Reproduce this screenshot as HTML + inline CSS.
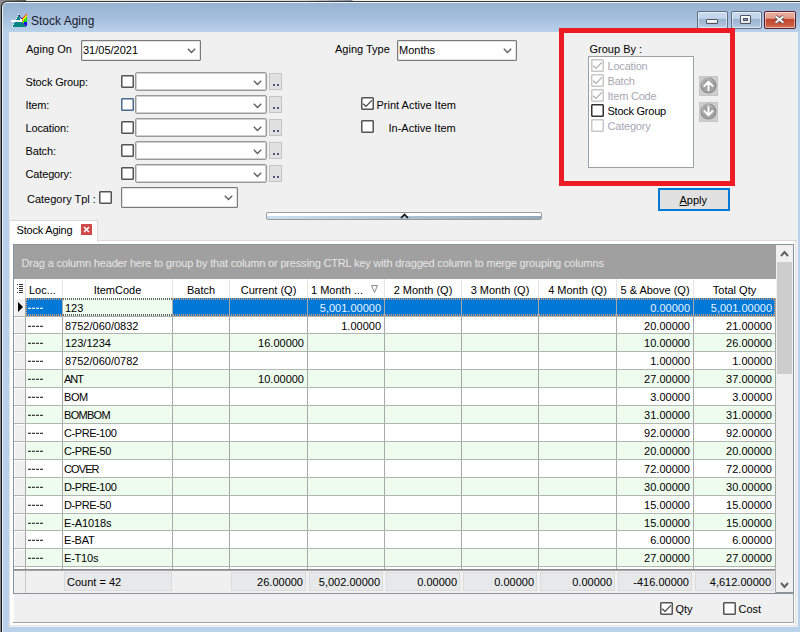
<!DOCTYPE html>
<html><head><meta charset="utf-8"><style>
html,body{margin:0;padding:0;width:800px;height:632px;overflow:hidden;background:#f0f0f0}
body{position:relative;font-family:"Liberation Sans", sans-serif}
.t{position:absolute;white-space:nowrap;line-height:1;font-family:"Liberation Sans", sans-serif}
</style></head><body>
<div style="position:absolute;left:0px;top:0px;width:800px;height:632px;background:#888888"></div><div style="position:absolute;left:26px;top:0px;width:774px;height:1px;background:linear-gradient(90deg,#e8e8e8 0px,#d8d8dc 280px,#9098b0 320px,#8890a8 326px,#f2f2f2 327px,#f0f0f0 774px)"></div><div style="position:absolute;left:0px;top:0px;width:26px;height:1px;background:linear-gradient(90deg,#8a8a8a,#5a5a5a)"></div><div style="position:absolute;left:1px;top:1px;width:820px;height:660px;background:#161616;border-top-left-radius:6px"></div><div style="position:absolute;left:6px;top:1px;width:794px;height:1px;background:#3a3a3a"></div><div style="position:absolute;left:2px;top:2px;width:820px;height:660px;background:#eef3f8;border-top-left-radius:5px"></div><div style="position:absolute;left:3px;top:3px;width:820px;height:660px;background:linear-gradient(180deg,#98b3d1 0px,#a3bddb 14px,#b9d1ea 29px,#b9d1ea 100%);border-top-left-radius:4px"></div><svg style="position:absolute;left:9px;top:11px" width="20" height="18" viewBox="0 0 20 18" shape-rendering="crispEdges"><rect x="9" y="3" width="1" height="1" fill="#ffffff"/><rect x="17" y="3" width="1" height="1" fill="#ff2a00"/><rect x="9" y="4" width="1" height="1" fill="#008484"/><rect x="10" y="4" width="1" height="1" fill="#1c1c9c"/><rect x="16" y="4" width="1" height="1" fill="#ff2a00"/><rect x="17" y="4" width="1" height="1" fill="#f4f000"/><rect x="8" y="5" width="1" height="1" fill="#ffffff"/><rect x="9" y="5" width="1" height="1" fill="#008484"/><rect x="10" y="5" width="1" height="1" fill="#1c1c9c"/><rect x="15" y="5" width="1" height="1" fill="#ff2a00"/><rect x="16" y="5" width="1" height="1" fill="#f4f000"/><rect x="17" y="5" width="1" height="1" fill="#f4f000"/><rect x="8" y="6" width="1" height="1" fill="#008484"/><rect x="9" y="6" width="1" height="1" fill="#008484"/><rect x="11" y="6" width="1" height="1" fill="#1c1c9c"/><rect x="14" y="6" width="1" height="1" fill="#ff2a00"/><rect x="15" y="6" width="1" height="1" fill="#f4f000"/><rect x="16" y="6" width="1" height="1" fill="#f4f000"/><rect x="17" y="6" width="1" height="1" fill="#10e010"/><rect x="7" y="7" width="1" height="1" fill="#ffffff"/><rect x="8" y="7" width="1" height="1" fill="#008484"/><rect x="9" y="7" width="1" height="1" fill="#008484"/><rect x="10" y="7" width="1" height="1" fill="#008484"/><rect x="12" y="7" width="1" height="1" fill="#1c1c9c"/><rect x="13" y="7" width="1" height="1" fill="#ff2a00"/><rect x="14" y="7" width="1" height="1" fill="#f4f000"/><rect x="15" y="7" width="1" height="1" fill="#f4f000"/><rect x="16" y="7" width="1" height="1" fill="#10e010"/><rect x="17" y="7" width="1" height="1" fill="#10e010"/><rect x="7" y="8" width="1" height="1" fill="#008484"/><rect x="8" y="8" width="1" height="1" fill="#008484"/><rect x="9" y="8" width="1" height="1" fill="#008484"/><rect x="10" y="8" width="1" height="1" fill="#008484"/><rect x="11" y="8" width="1" height="1" fill="#ffffff"/><rect x="12" y="8" width="1" height="1" fill="#ffffff"/><rect x="13" y="8" width="1" height="1" fill="#ffb000"/><rect x="14" y="8" width="1" height="1" fill="#f4f000"/><rect x="15" y="8" width="1" height="1" fill="#10e010"/><rect x="16" y="8" width="1" height="1" fill="#f4f000"/><rect x="17" y="8" width="1" height="1" fill="#10e010"/><rect x="2" y="9" width="1" height="1" fill="#ffffff"/><rect x="3" y="9" width="1" height="1" fill="#ffffff"/><rect x="4" y="9" width="1" height="1" fill="#ffffff"/><rect x="5" y="9" width="1" height="1" fill="#ffffff"/><rect x="6" y="9" width="1" height="1" fill="#ffffff"/><rect x="7" y="9" width="1" height="1" fill="#ffffff"/><rect x="8" y="9" width="1" height="1" fill="#ffffff"/><rect x="9" y="9" width="1" height="1" fill="#ffffff"/><rect x="10" y="9" width="1" height="1" fill="#ffffff"/><rect x="11" y="9" width="1" height="1" fill="#ffffff"/><rect x="12" y="9" width="1" height="1" fill="#ffffff"/><rect x="13" y="9" width="1" height="1" fill="#9020a0"/><rect x="14" y="9" width="1" height="1" fill="#f4f000"/><rect x="15" y="9" width="1" height="1" fill="#10e010"/><rect x="16" y="9" width="1" height="1" fill="#10e010"/><rect x="17" y="9" width="1" height="1" fill="#10e010"/><rect x="2" y="10" width="1" height="1" fill="#ffffff"/><rect x="3" y="10" width="1" height="1" fill="#ffffff"/><rect x="4" y="10" width="1" height="1" fill="#ffffff"/><rect x="5" y="10" width="1" height="1" fill="#ffffff"/><rect x="6" y="10" width="1" height="1" fill="#ffffff"/><rect x="7" y="10" width="1" height="1" fill="#ffffff"/><rect x="8" y="10" width="1" height="1" fill="#ffffff"/><rect x="9" y="10" width="1" height="1" fill="#ffffff"/><rect x="10" y="10" width="1" height="1" fill="#ffffff"/><rect x="11" y="10" width="1" height="1" fill="#ffffff"/><rect x="12" y="10" width="1" height="1" fill="#ffffff"/><rect x="13" y="10" width="1" height="1" fill="#f4f000"/><rect x="14" y="10" width="1" height="1" fill="#10e010"/><rect x="15" y="10" width="1" height="1" fill="#10e010"/><rect x="16" y="10" width="1" height="1" fill="#10e010"/><rect x="17" y="10" width="1" height="1" fill="#10e010"/><rect x="6" y="11" width="1" height="1" fill="#008484"/><rect x="7" y="11" width="1" height="1" fill="#008484"/><rect x="8" y="11" width="1" height="1" fill="#008484"/><rect x="9" y="11" width="1" height="1" fill="#008484"/><rect x="10" y="11" width="1" height="1" fill="#008484"/><rect x="11" y="11" width="1" height="1" fill="#008484"/><rect x="12" y="11" width="1" height="1" fill="#008484"/><rect x="13" y="11" width="1" height="1" fill="#008484"/><rect x="14" y="11" width="1" height="1" fill="#ffb000"/><rect x="15" y="11" width="1" height="1" fill="#0a0aff"/><rect x="16" y="11" width="1" height="1" fill="#0a0aff"/><rect x="17" y="11" width="1" height="1" fill="#0a0aff"/><rect x="5" y="12" width="1" height="1" fill="#008484"/><rect x="6" y="12" width="1" height="1" fill="#008484"/><rect x="7" y="12" width="1" height="1" fill="#008484"/><rect x="8" y="12" width="1" height="1" fill="#008484"/><rect x="9" y="12" width="1" height="1" fill="#008484"/><rect x="10" y="12" width="1" height="1" fill="#008484"/><rect x="11" y="12" width="1" height="1" fill="#008484"/><rect x="12" y="12" width="1" height="1" fill="#008484"/><rect x="13" y="12" width="1" height="1" fill="#008484"/><rect x="14" y="12" width="1" height="1" fill="#008484"/><rect x="15" y="12" width="1" height="1" fill="#0a0aff"/><rect x="16" y="12" width="1" height="1" fill="#0a0aff"/><rect x="17" y="12" width="1" height="1" fill="#0a0aff"/><rect x="4" y="13" width="1" height="1" fill="#ffffff"/><rect x="5" y="13" width="1" height="1" fill="#008484"/><rect x="6" y="13" width="1" height="1" fill="#008484"/><rect x="7" y="13" width="1" height="1" fill="#008484"/><rect x="8" y="13" width="1" height="1" fill="#008484"/><rect x="9" y="13" width="1" height="1" fill="#008484"/><rect x="10" y="13" width="1" height="1" fill="#008484"/><rect x="11" y="13" width="1" height="1" fill="#008484"/><rect x="12" y="13" width="1" height="1" fill="#008484"/><rect x="13" y="13" width="1" height="1" fill="#008484"/><rect x="14" y="13" width="1" height="1" fill="#008484"/><rect x="15" y="13" width="1" height="1" fill="#9020a0"/><rect x="16" y="13" width="1" height="1" fill="#0a0aff"/><rect x="17" y="13" width="1" height="1" fill="#0a0aff"/><rect x="4" y="14" width="1" height="1" fill="#008484"/><rect x="5" y="14" width="1" height="1" fill="#008484"/><rect x="6" y="14" width="1" height="1" fill="#008484"/><rect x="7" y="14" width="1" height="1" fill="#008484"/><rect x="8" y="14" width="1" height="1" fill="#008484"/><rect x="9" y="14" width="1" height="1" fill="#008484"/><rect x="10" y="14" width="1" height="1" fill="#008484"/><rect x="11" y="14" width="1" height="1" fill="#008484"/><rect x="12" y="14" width="1" height="1" fill="#008484"/><rect x="13" y="14" width="1" height="1" fill="#008484"/><rect x="14" y="14" width="1" height="1" fill="#008484"/><rect x="15" y="14" width="1" height="1" fill="#008484"/><rect x="16" y="14" width="1" height="1" fill="#9020a0"/><rect x="17" y="14" width="1" height="1" fill="#0a0aff"/><rect x="3" y="15" width="1" height="1" fill="#ffffff"/><rect x="4" y="15" width="1" height="1" fill="#008484"/><rect x="5" y="15" width="1" height="1" fill="#008484"/><rect x="6" y="15" width="1" height="1" fill="#008484"/><rect x="7" y="15" width="1" height="1" fill="#008484"/><rect x="8" y="15" width="1" height="1" fill="#008484"/><rect x="9" y="15" width="1" height="1" fill="#008484"/><rect x="10" y="15" width="1" height="1" fill="#008484"/><rect x="11" y="15" width="1" height="1" fill="#008484"/><rect x="12" y="15" width="1" height="1" fill="#008484"/><rect x="13" y="15" width="1" height="1" fill="#008484"/><rect x="14" y="15" width="1" height="1" fill="#008484"/><rect x="15" y="15" width="1" height="1" fill="#008484"/><rect x="16" y="15" width="1" height="1" fill="#008484"/></svg><div class="t " style="left:31px;top:15.14px;font-size:12px;color:#1a1a2a;">Stock Aging</div><div style="position:absolute;left:697px;top:11px;width:29px;height:16px;border:1px solid #5c6c82;border-radius:2px;background:linear-gradient(180deg,#cbdbee 0%,#c2d4ea 40%,#9ab3cf 44%,#a9c0da 80%,#bcd2e8 100%);box-shadow:inset 0 0 0 1px rgba(255,255,255,0.5)"></div><div style="position:absolute;left:731px;top:11px;width:29px;height:16px;border:1px solid #5c6c82;border-radius:2px;background:linear-gradient(180deg,#cbdbee 0%,#c2d4ea 40%,#9ab3cf 44%,#a9c0da 80%,#bcd2e8 100%);box-shadow:inset 0 0 0 1px rgba(255,255,255,0.5)"></div><div style="position:absolute;left:764px;top:11px;width:30px;height:16px;border:1px solid #5a2030;border-radius:2px;background:linear-gradient(180deg,#eab0a2 0%,#e39c8a 40%,#c0432a 44%,#c85a40 80%,#d27a62 100%);box-shadow:inset 0 0 0 1px rgba(255,255,255,0.5)"></div><div style="position:absolute;left:706px;top:19px;width:10px;height:3px;background:linear-gradient(180deg,#fff,#e0e0e0);border:1px solid #4a5566;border-radius:1px"></div><div style="position:absolute;left:740px;top:15px;width:9px;height:7px;border:1px solid #4a5566;border-radius:1px;background:linear-gradient(180deg,#fff,#e4e4e4)"></div><div style="position:absolute;left:743px;top:18px;width:3px;height:1px;border:1px solid #4a5566;background:#8aa0bc"></div><svg style="position:absolute;left:774px;top:15px" width="11" height="9" viewBox="0 0 11 9">
<path d="M1.6,1.4 L9.4,7.6 M9.4,1.4 L1.6,7.6" stroke="#4a3a40" stroke-width="3.6"/>
<path d="M1.6,1.4 L9.4,7.6 M9.4,1.4 L1.6,7.6" stroke="#f2f2f2" stroke-width="2"/>
</svg><div style="position:absolute;left:9px;top:32px;width:789px;height:595px;background:#f0f0f0"></div><div class="t " style="left:26px;top:44.09px;font-size:11px;color:#000;">Aging On</div><div style="position:absolute;left:81px;top:40px;width:118px;height:19px;border:1px solid #7a7a7a;background:#fff;border-radius:1px;box-shadow:inset 0 0 0 0.5px #c8c8c8;"></div><svg style="position:absolute;left:187px;top:48px" width="10" height="6" viewBox="0 0 10 6"><path d="M0.8,0.8 L4.5,4.5 L8.2,0.8" stroke="#606060" stroke-width="1.4" fill="none"/></svg><div class="t " style="left:83px;top:45.19px;font-size:11px;color:#000;">31/05/2021</div><div class="t " style="left:335px;top:44.49px;font-size:11px;color:#000;">Aging Type</div><div style="position:absolute;left:397px;top:40px;width:118px;height:19px;border:1px solid #7a7a7a;background:#fff;border-radius:1px;box-shadow:inset 0 0 0 0.5px #c8c8c8;"></div><svg style="position:absolute;left:503px;top:48px" width="10" height="6" viewBox="0 0 10 6"><path d="M0.8,0.8 L4.5,4.5 L8.2,0.8" stroke="#606060" stroke-width="1.4" fill="none"/></svg><div class="t " style="left:399px;top:45.19px;font-size:11px;color:#000;">Months</div><div class="t " style="left:25.5px;top:77.09px;font-size:11px;color:#000;letter-spacing:-0.15px">Stock Group:</div><div style="position:absolute;left:121px;top:75px;width:11px;height:11px;border:1px solid #555;border-radius:1px;background:#fff;box-shadow:inset 0 0 0 0.5px #555"></div><div style="position:absolute;left:135px;top:72px;width:130px;height:17px;border:1px solid #9a9a9a;background:#fff;border-radius:2px;box-shadow:inset 0 0 0 1px #cfcfcf;"></div><svg style="position:absolute;left:253px;top:80px" width="10" height="6" viewBox="0 0 10 6"><path d="M0.8,0.8 L4.5,4.5 L8.2,0.8" stroke="#606060" stroke-width="1.4" fill="none"/></svg><div style="position:absolute;left:269px;top:73px;width:11px;height:15px;border:1px solid #c4c4c4;background:#e1e1e1"></div><div style="position:absolute;left:273px;top:84px;width:2px;height:2px;background:#55557a"></div><div style="position:absolute;left:277px;top:84px;width:2px;height:2px;background:#55557a"></div><div class="t " style="left:25.5px;top:100.09px;font-size:11px;color:#000;letter-spacing:-0.15px">Item:</div><div style="position:absolute;left:121px;top:98px;width:11px;height:11px;border:1px solid #4a6a8a;border-radius:1px;background:#fff;box-shadow:inset 0 0 0 0.5px #4a6a8a"></div><div style="position:absolute;left:135px;top:95px;width:130px;height:17px;border:1px solid #9a9a9a;background:#fff;border-radius:2px;box-shadow:inset 0 0 0 1px #cfcfcf;"></div><svg style="position:absolute;left:253px;top:103px" width="10" height="6" viewBox="0 0 10 6"><path d="M0.8,0.8 L4.5,4.5 L8.2,0.8" stroke="#606060" stroke-width="1.4" fill="none"/></svg><div style="position:absolute;left:269px;top:96px;width:11px;height:15px;border:1px solid #c4c4c4;background:#e1e1e1"></div><div style="position:absolute;left:273px;top:107px;width:2px;height:2px;background:#55557a"></div><div style="position:absolute;left:277px;top:107px;width:2px;height:2px;background:#55557a"></div><div class="t " style="left:25.5px;top:123.09px;font-size:11px;color:#000;letter-spacing:-0.15px">Location:</div><div style="position:absolute;left:121px;top:121px;width:11px;height:11px;border:1px solid #555;border-radius:1px;background:#fff;box-shadow:inset 0 0 0 0.5px #555"></div><div style="position:absolute;left:135px;top:118px;width:130px;height:17px;border:1px solid #9a9a9a;background:#fff;border-radius:2px;box-shadow:inset 0 0 0 1px #cfcfcf;"></div><svg style="position:absolute;left:253px;top:126px" width="10" height="6" viewBox="0 0 10 6"><path d="M0.8,0.8 L4.5,4.5 L8.2,0.8" stroke="#606060" stroke-width="1.4" fill="none"/></svg><div style="position:absolute;left:269px;top:119px;width:11px;height:15px;border:1px solid #c4c4c4;background:#e1e1e1"></div><div style="position:absolute;left:273px;top:130px;width:2px;height:2px;background:#55557a"></div><div style="position:absolute;left:277px;top:130px;width:2px;height:2px;background:#55557a"></div><div class="t " style="left:25.5px;top:146.09px;font-size:11px;color:#000;letter-spacing:-0.15px">Batch:</div><div style="position:absolute;left:121px;top:144px;width:11px;height:11px;border:1px solid #555;border-radius:1px;background:#fff;box-shadow:inset 0 0 0 0.5px #555"></div><div style="position:absolute;left:135px;top:141px;width:130px;height:17px;border:1px solid #9a9a9a;background:#fff;border-radius:2px;box-shadow:inset 0 0 0 1px #cfcfcf;"></div><svg style="position:absolute;left:253px;top:149px" width="10" height="6" viewBox="0 0 10 6"><path d="M0.8,0.8 L4.5,4.5 L8.2,0.8" stroke="#606060" stroke-width="1.4" fill="none"/></svg><div style="position:absolute;left:269px;top:142px;width:11px;height:15px;border:1px solid #c4c4c4;background:#e1e1e1"></div><div style="position:absolute;left:273px;top:153px;width:2px;height:2px;background:#55557a"></div><div style="position:absolute;left:277px;top:153px;width:2px;height:2px;background:#55557a"></div><div class="t " style="left:25.5px;top:169.09px;font-size:11px;color:#000;letter-spacing:-0.15px">Category:</div><div style="position:absolute;left:121px;top:167px;width:11px;height:11px;border:1px solid #555;border-radius:1px;background:#fff;box-shadow:inset 0 0 0 0.5px #555"></div><div style="position:absolute;left:135px;top:164px;width:130px;height:17px;border:1px solid #9a9a9a;background:#fff;border-radius:2px;box-shadow:inset 0 0 0 1px #cfcfcf;"></div><svg style="position:absolute;left:253px;top:172px" width="10" height="6" viewBox="0 0 10 6"><path d="M0.8,0.8 L4.5,4.5 L8.2,0.8" stroke="#606060" stroke-width="1.4" fill="none"/></svg><div style="position:absolute;left:269px;top:165px;width:11px;height:15px;border:1px solid #c4c4c4;background:#e1e1e1"></div><div style="position:absolute;left:273px;top:176px;width:2px;height:2px;background:#55557a"></div><div style="position:absolute;left:277px;top:176px;width:2px;height:2px;background:#55557a"></div><div class="t " style="left:27px;top:193.89px;font-size:11px;color:#000;">Category Tpl :</div><div style="position:absolute;left:99px;top:191px;width:11px;height:11px;border:1px solid #555;border-radius:1px;background:#fff;box-shadow:inset 0 0 0 0.5px #555"></div><div style="position:absolute;left:121px;top:187px;width:115px;height:19px;border:1px solid #7a7a7a;background:#fff;border-radius:1px;box-shadow:inset 0 0 0 0.5px #c8c8c8;"></div><svg style="position:absolute;left:224px;top:195px" width="10" height="6" viewBox="0 0 10 6"><path d="M0.8,0.8 L4.5,4.5 L8.2,0.8" stroke="#606060" stroke-width="1.4" fill="none"/></svg><div style="position:absolute;left:361px;top:97px;width:11px;height:11px;border:1px solid #555;border-radius:1px;background:#fff;box-shadow:inset 0 0 0 0.5px #555"></div><svg style="position:absolute;left:361px;top:97px" width="13" height="13" viewBox="0 0 13 13"><path d="M2.2,6.8 L5,9.4 L10.8,3.4" stroke="#444" stroke-width="1.3" fill="none"/></svg><div class="t " style="left:376.5px;top:99.89px;font-size:11px;color:#000;">Print Active Item</div><div style="position:absolute;left:361px;top:120px;width:11px;height:11px;border:1px solid #555;border-radius:1px;background:#fff;box-shadow:inset 0 0 0 0.5px #555"></div><div class="t " style="left:388.5px;top:122.89px;font-size:11px;color:#000;">In-Active Item</div><div class="t " style="left:589.5px;top:44.29px;font-size:11px;color:#000;">Group By :</div><div style="position:absolute;left:588px;top:56px;width:104px;height:110px;border:1px solid #9ca1a8;background:#fff"></div><div style="position:absolute;left:591px;top:59px;width:11px;height:11px;border:1px solid #c8c8c8;border-radius:1px;background:#fff;box-shadow:inset 0 0 0 0.5px #c8c8c8"></div><svg style="position:absolute;left:591px;top:59px" width="13" height="13" viewBox="0 0 13 13"><path d="M2.2,6.8 L5,9.4 L10.8,3.4" stroke="#b0b0b0" stroke-width="1.3" fill="none"/></svg><div class="t " style="left:607.5px;top:60.99px;font-size:11px;color:#a8a8b4;letter-spacing:-0.2px">Location</div><div style="position:absolute;left:591px;top:74px;width:11px;height:11px;border:1px solid #c8c8c8;border-radius:1px;background:#fff;box-shadow:inset 0 0 0 0.5px #c8c8c8"></div><svg style="position:absolute;left:591px;top:74px" width="13" height="13" viewBox="0 0 13 13"><path d="M2.2,6.8 L5,9.4 L10.8,3.4" stroke="#b0b0b0" stroke-width="1.3" fill="none"/></svg><div class="t " style="left:607.5px;top:75.99px;font-size:11px;color:#a8a8b4;letter-spacing:-0.2px">Batch</div><div style="position:absolute;left:591px;top:89px;width:11px;height:11px;border:1px solid #c8c8c8;border-radius:1px;background:#fff;box-shadow:inset 0 0 0 0.5px #c8c8c8"></div><svg style="position:absolute;left:591px;top:89px" width="13" height="13" viewBox="0 0 13 13"><path d="M2.2,6.8 L5,9.4 L10.8,3.4" stroke="#b0b0b0" stroke-width="1.3" fill="none"/></svg><div class="t " style="left:607.5px;top:90.99px;font-size:11px;color:#a8a8b4;letter-spacing:-0.2px">Item Code</div><div style="position:absolute;left:591px;top:104px;width:11px;height:11px;border:1px solid #333;border-radius:1px;background:#fff;box-shadow:inset 0 0 0 0.5px #333"></div><div class="t " style="left:607.5px;top:105.99px;font-size:11px;color:#000;letter-spacing:-0.25px">Stock Group</div><div style="position:absolute;left:591px;top:119px;width:11px;height:11px;border:1px solid #c8c8c8;border-radius:1px;background:#fff;box-shadow:inset 0 0 0 0.5px #c8c8c8"></div><div class="t " style="left:607.5px;top:120.99px;font-size:11px;color:#a8a8b4;letter-spacing:-0.2px">Category</div><svg style="position:absolute;left:699px;top:76px" width="19" height="20" viewBox="0 0 19 20">
<rect x="0" y="0" width="19" height="20" fill="#cdcdcd"/>
<rect x="0.5" y="0.5" width="18" height="19" fill="none" stroke="#c6c6c6"/>
<circle cx="9.5" cy="9.6" r="7.4" fill="#a2a2a2" stroke="#8c8c8c" stroke-width="1.2"/>
<path d="M4.2,11.5 A5.6,5.6 0 0 1 13.5,5" fill="none" stroke="#c4c4c4" stroke-width="1"/>
<path d="M5.4,10 L9.5,5.6 L13.6,10 M9.5,6.2 L9.5,14.2" stroke="#ffffff" stroke-width="1.9" fill="none" stroke-linecap="round" stroke-linejoin="round"/>
</svg><svg style="position:absolute;left:699px;top:102px" width="19" height="20" viewBox="0 0 19 20">
<rect x="0" y="0" width="19" height="20" fill="#cdcdcd"/>
<rect x="0.5" y="0.5" width="18" height="19" fill="none" stroke="#c6c6c6"/>
<circle cx="9.5" cy="9.6" r="7.4" fill="#a2a2a2" stroke="#8c8c8c" stroke-width="1.2"/>
<path d="M4.2,11.5 A5.6,5.6 0 0 1 13.5,5" fill="none" stroke="#c4c4c4" stroke-width="1"/>
<path d="M5.4,9 L9.5,13.4 L13.6,9 M9.5,4.8 L9.5,12.8" stroke="#ffffff" stroke-width="1.9" fill="none" stroke-linecap="round" stroke-linejoin="round"/>
</svg><div style="position:absolute;left:559px;top:28px;width:166px;height:148px;border:5px solid #ed1c24"></div><div style="position:absolute;left:658px;top:188px;width:68px;height:19px;border:2px solid #0078d7;background:#e1e1e1"></div><div class="t " style="left:679.5px;top:195.29px;font-size:11px;color:#000;"><u>A</u>pply</div><div style="position:absolute;left:266px;top:212px;width:274px;height:6px;border:1px solid #9a9a9a;border-radius:2px;background:linear-gradient(180deg,#fff 0,#fff 3px,transparent 3px),linear-gradient(90deg,#c8e0f0,#90a8b8)"></div><svg style="position:absolute;left:400px;top:213px" width="9" height="6" viewBox="0 0 9 6"><path d="M1,5 L4.5,1.5 L8,5" stroke="#111" stroke-width="1.6" fill="none"/></svg><div style="position:absolute;left:9px;top:240px;width:789px;height:387px;background:#fff"></div><div style="position:absolute;left:795px;top:240px;width:1px;height:386px;background:#e3e3e3"></div><div style="position:absolute;left:796px;top:240px;width:2px;height:387px;background:#f0f0f0"></div><div style="position:absolute;left:9px;top:220px;width:1px;height:407px;background:#e3e3e3"></div><div style="position:absolute;left:9px;top:625px;width:787px;height:1px;background:#e3e3e3"></div><div style="position:absolute;left:9px;top:626px;width:789px;height:1px;background:#f0f0f0"></div><div style="position:absolute;left:9px;top:220px;width:87px;height:21px;border:1px solid #d9d9d9;border-left:1px solid #e3e3e3;border-bottom:none;background:#fff"></div><div style="position:absolute;left:97px;top:240px;width:700px;height:1px;background:#d9d9d9"></div><div class="t " style="left:16.5px;top:225.49px;font-size:11px;color:#000;letter-spacing:-0.2px">Stock Aging</div><div style="position:absolute;left:81px;top:224px;width:11px;height:11px;background:#d04848"></div><svg style="position:absolute;left:81px;top:224px" width="11" height="11" viewBox="0 0 11 11"><path d="M3,3 L8,8 M8,3 L3,8" stroke="#fff" stroke-width="1.6"/></svg><div style="position:absolute;left:13px;top:244px;width:780px;height:378px;border-right:1px solid #a0a0a0;border-bottom:1px solid #a0a0a0;background:#f0f0f0;box-sizing:content-box"></div><div style="position:absolute;left:13px;top:594px;width:1px;height:28px;background:#fff"></div><div style="position:absolute;left:13px;top:244px;width:779px;height:348px;border:1px solid #8a929c;background:#fff"></div><div style="position:absolute;left:14px;top:245px;width:762px;height:34px;background:#a0a0a0"></div><div class="t " style="left:21.6px;top:258.39px;font-size:11px;color:#e6e6e6;letter-spacing:-0.17px">Drag a column header here to group by that column or pressing CTRL key with dragged column to merge grouping columns</div><div style="position:absolute;left:776px;top:245px;width:17px;height:348px;background:#f0f0f0"></div><div style="position:absolute;left:777px;top:262px;width:15px;height:112px;background:#cdcdcd"></div><svg style="position:absolute;left:780px;top:250px" width="9" height="7" viewBox="0 0 9 7"><path d="M1,6 L4.5,2 L8,6" stroke="#606060" stroke-width="2" fill="none"/></svg><svg style="position:absolute;left:780px;top:582px" width="9" height="7" viewBox="0 0 9 7"><path d="M1,1 L4.5,5 L8,1" stroke="#606060" stroke-width="2" fill="none"/></svg><div style="position:absolute;left:14px;top:279px;width:762px;height:20px;background:#fff"></div><div style="position:absolute;left:25px;top:279px;width:1px;height:20px;background:#e4e4e4"></div><div style="position:absolute;left:62px;top:279px;width:1px;height:20px;background:#e4e4e4"></div><div style="position:absolute;left:172px;top:279px;width:1px;height:20px;background:#e4e4e4"></div><div style="position:absolute;left:229px;top:279px;width:1px;height:20px;background:#e4e4e4"></div><div style="position:absolute;left:307px;top:279px;width:1px;height:20px;background:#e4e4e4"></div><div style="position:absolute;left:384px;top:279px;width:1px;height:20px;background:#e4e4e4"></div><div style="position:absolute;left:461px;top:279px;width:1px;height:20px;background:#e4e4e4"></div><div style="position:absolute;left:538px;top:279px;width:1px;height:20px;background:#e4e4e4"></div><div style="position:absolute;left:616px;top:279px;width:1px;height:20px;background:#e4e4e4"></div><div style="position:absolute;left:693px;top:279px;width:1px;height:20px;background:#e4e4e4"></div><div class="t " style="left:29px;top:285.49px;font-size:11px;color:#000;">Loc...</div><div class="t" style="left:-82.5px;width:400px;text-align:center;top:285.49px;font-size:11px;color:#000;">ItemCode</div><div class="t" style="left:1.0px;width:400px;text-align:center;top:285.49px;font-size:11px;color:#000;">Batch</div><div class="t" style="left:68.5px;width:400px;text-align:center;top:285.49px;font-size:11px;color:#000;">Current (Q)</div><div class="t " style="left:311px;top:285.49px;font-size:11px;color:#000;">1 Month ...</div><div class="t" style="left:223.0px;width:400px;text-align:center;top:285.49px;font-size:11px;color:#000;">2 Month (Q)</div><div class="t" style="left:300.0px;width:400px;text-align:center;top:285.49px;font-size:11px;color:#000;">3 Month (Q)</div><div class="t" style="left:377.5px;width:400px;text-align:center;top:285.49px;font-size:11px;color:#000;">4 Month (Q)</div><div class="t" style="left:455.0px;width:400px;text-align:center;top:285.49px;font-size:11px;color:#000;">5 &amp; Above (Q)</div><div class="t" style="left:534.5px;width:400px;text-align:center;top:285.49px;font-size:11px;color:#000;">Total Qty</div><svg style="position:absolute;left:370px;top:284px" width="9" height="10" viewBox="0 0 9 10"><path d="M1.5,1.5 L7.5,1.5 L4.5,8.5 Z" stroke="#8a8a8a" stroke-width="1" fill="none"/></svg><div style="position:absolute;left:19px;top:284px;width:4px;height:1px;background:#333"></div><div style="position:absolute;left:19px;top:286px;width:4px;height:1px;background:#333"></div><div style="position:absolute;left:19px;top:288px;width:4px;height:1px;background:#333"></div><div style="position:absolute;left:19px;top:290px;width:4px;height:1px;background:#333"></div><div style="position:absolute;left:19px;top:292px;width:4px;height:1px;background:#333"></div><div style="position:absolute;left:17px;top:284px;width:1px;height:1px;background:#333"></div><div style="position:absolute;left:17px;top:288px;width:1px;height:1px;background:#333"></div><div style="position:absolute;left:17px;top:292px;width:1px;height:1px;background:#333"></div><div style="position:absolute;left:14px;top:298px;width:11px;height:18px;background:#f0f0f0;box-shadow:inset 1px 1px 0 #fff"></div><div style="position:absolute;left:26px;top:298px;width:749px;height:18px;background:#eefcee"></div><div style="position:absolute;left:26px;top:298px;width:37px;height:18px;background:#0078d7"></div><div style="position:absolute;left:173px;top:298px;width:602px;height:18px;background:#0078d7"></div><div style="position:absolute;left:14px;top:316px;width:762px;height:1px;background:#b2b6b2"></div><div style="position:absolute;left:25px;top:298px;width:1px;height:18px;background:#a8a8a8"></div><div style="position:absolute;left:62px;top:298px;width:1px;height:18px;background:#a8a8a8"></div><div style="position:absolute;left:172px;top:298px;width:1px;height:18px;background:#a8a8a8"></div><div style="position:absolute;left:229px;top:298px;width:1px;height:18px;background:#a8a8a8"></div><div style="position:absolute;left:307px;top:298px;width:1px;height:18px;background:#a8a8a8"></div><div style="position:absolute;left:384px;top:298px;width:1px;height:18px;background:#a8a8a8"></div><div style="position:absolute;left:461px;top:298px;width:1px;height:18px;background:#a8a8a8"></div><div style="position:absolute;left:538px;top:298px;width:1px;height:18px;background:#a8a8a8"></div><div style="position:absolute;left:616px;top:298px;width:1px;height:18px;background:#a8a8a8"></div><div style="position:absolute;left:693px;top:298px;width:1px;height:18px;background:#a8a8a8"></div><div style="position:absolute;left:775px;top:298px;width:1px;height:18px;background:#a8a8a8"></div><div style="position:absolute;left:28px;top:308px;width:3px;height:1px;background:rgba(225,242,255,0.95)"></div><div style="position:absolute;left:28px;top:307px;width:3px;height:1px;background:rgba(225,242,255,0.35)"></div><div style="position:absolute;left:32px;top:308px;width:3px;height:1px;background:rgba(225,242,255,0.95)"></div><div style="position:absolute;left:32px;top:307px;width:3px;height:1px;background:rgba(225,242,255,0.35)"></div><div style="position:absolute;left:36px;top:308px;width:3px;height:1px;background:rgba(225,242,255,0.95)"></div><div style="position:absolute;left:36px;top:307px;width:3px;height:1px;background:rgba(225,242,255,0.35)"></div><div style="position:absolute;left:40px;top:308px;width:3px;height:1px;background:rgba(225,242,255,0.95)"></div><div style="position:absolute;left:40px;top:307px;width:3px;height:1px;background:rgba(225,242,255,0.35)"></div><div class="t " style="left:65px;top:303.49px;font-size:11px;color:#000;">123</div><div class="t" style="right:419px;top:303.49px;font-size:11px;color:#e8f4ff;">5,001.00000</div><div class="t" style="right:110px;top:303.49px;font-size:11px;color:#e8f4ff;">0.00000</div><div class="t" style="right:28px;top:303.49px;font-size:11px;color:#e8f4ff;">5,001.00000</div><div style="position:absolute;left:14px;top:317px;width:11px;height:16px;background:#f0f0f0;box-shadow:inset 1px 1px 0 #fff"></div><div style="position:absolute;left:26px;top:317px;width:749px;height:16px;background:#ffffff"></div><div style="position:absolute;left:14px;top:333px;width:762px;height:1px;background:#b2b6b2"></div><div style="position:absolute;left:25px;top:317px;width:1px;height:16px;background:#a8a8a8"></div><div style="position:absolute;left:62px;top:317px;width:1px;height:16px;background:#a8a8a8"></div><div style="position:absolute;left:172px;top:317px;width:1px;height:16px;background:#a8a8a8"></div><div style="position:absolute;left:229px;top:317px;width:1px;height:16px;background:#a8a8a8"></div><div style="position:absolute;left:307px;top:317px;width:1px;height:16px;background:#a8a8a8"></div><div style="position:absolute;left:384px;top:317px;width:1px;height:16px;background:#a8a8a8"></div><div style="position:absolute;left:461px;top:317px;width:1px;height:16px;background:#a8a8a8"></div><div style="position:absolute;left:538px;top:317px;width:1px;height:16px;background:#a8a8a8"></div><div style="position:absolute;left:616px;top:317px;width:1px;height:16px;background:#a8a8a8"></div><div style="position:absolute;left:693px;top:317px;width:1px;height:16px;background:#a8a8a8"></div><div style="position:absolute;left:775px;top:317px;width:1px;height:16px;background:#a8a8a8"></div><div style="position:absolute;left:28px;top:326px;width:3px;height:1px;background:rgba(0,0,0,0.75)"></div><div style="position:absolute;left:28px;top:325px;width:3px;height:1px;background:rgba(0,0,0,0.22)"></div><div style="position:absolute;left:32px;top:326px;width:3px;height:1px;background:rgba(0,0,0,0.75)"></div><div style="position:absolute;left:32px;top:325px;width:3px;height:1px;background:rgba(0,0,0,0.22)"></div><div style="position:absolute;left:36px;top:326px;width:3px;height:1px;background:rgba(0,0,0,0.75)"></div><div style="position:absolute;left:36px;top:325px;width:3px;height:1px;background:rgba(0,0,0,0.22)"></div><div style="position:absolute;left:40px;top:326px;width:3px;height:1px;background:rgba(0,0,0,0.75)"></div><div style="position:absolute;left:40px;top:325px;width:3px;height:1px;background:rgba(0,0,0,0.22)"></div><div class="t " style="left:65px;top:321.49px;font-size:11px;color:#000;">8752/060/0832</div><div class="t" style="right:419px;top:321.49px;font-size:11px;color:#000;">1.00000</div><div class="t" style="right:110px;top:321.49px;font-size:11px;color:#000;">20.00000</div><div class="t" style="right:28px;top:321.49px;font-size:11px;color:#000;">21.00000</div><div style="position:absolute;left:14px;top:334px;width:11px;height:17px;background:#f0f0f0;box-shadow:inset 1px 1px 0 #fff"></div><div style="position:absolute;left:26px;top:334px;width:749px;height:17px;background:#eefcee"></div><div style="position:absolute;left:14px;top:351px;width:762px;height:1px;background:#b2b6b2"></div><div style="position:absolute;left:25px;top:334px;width:1px;height:17px;background:#a8a8a8"></div><div style="position:absolute;left:62px;top:334px;width:1px;height:17px;background:#a8a8a8"></div><div style="position:absolute;left:172px;top:334px;width:1px;height:17px;background:#a8a8a8"></div><div style="position:absolute;left:229px;top:334px;width:1px;height:17px;background:#a8a8a8"></div><div style="position:absolute;left:307px;top:334px;width:1px;height:17px;background:#a8a8a8"></div><div style="position:absolute;left:384px;top:334px;width:1px;height:17px;background:#a8a8a8"></div><div style="position:absolute;left:461px;top:334px;width:1px;height:17px;background:#a8a8a8"></div><div style="position:absolute;left:538px;top:334px;width:1px;height:17px;background:#a8a8a8"></div><div style="position:absolute;left:616px;top:334px;width:1px;height:17px;background:#a8a8a8"></div><div style="position:absolute;left:693px;top:334px;width:1px;height:17px;background:#a8a8a8"></div><div style="position:absolute;left:775px;top:334px;width:1px;height:17px;background:#a8a8a8"></div><div style="position:absolute;left:28px;top:343px;width:3px;height:1px;background:rgba(0,0,0,0.75)"></div><div style="position:absolute;left:28px;top:342px;width:3px;height:1px;background:rgba(0,0,0,0.22)"></div><div style="position:absolute;left:32px;top:343px;width:3px;height:1px;background:rgba(0,0,0,0.75)"></div><div style="position:absolute;left:32px;top:342px;width:3px;height:1px;background:rgba(0,0,0,0.22)"></div><div style="position:absolute;left:36px;top:343px;width:3px;height:1px;background:rgba(0,0,0,0.75)"></div><div style="position:absolute;left:36px;top:342px;width:3px;height:1px;background:rgba(0,0,0,0.22)"></div><div style="position:absolute;left:40px;top:343px;width:3px;height:1px;background:rgba(0,0,0,0.75)"></div><div style="position:absolute;left:40px;top:342px;width:3px;height:1px;background:rgba(0,0,0,0.22)"></div><div class="t " style="left:65px;top:338.49px;font-size:11px;color:#000;">123/1234</div><div class="t" style="right:496px;top:338.49px;font-size:11px;color:#000;">16.00000</div><div class="t" style="right:110px;top:338.49px;font-size:11px;color:#000;">10.00000</div><div class="t" style="right:28px;top:338.49px;font-size:11px;color:#000;">26.00000</div><div style="position:absolute;left:14px;top:352px;width:11px;height:17px;background:#f0f0f0;box-shadow:inset 1px 1px 0 #fff"></div><div style="position:absolute;left:26px;top:352px;width:749px;height:17px;background:#ffffff"></div><div style="position:absolute;left:14px;top:369px;width:762px;height:1px;background:#b2b6b2"></div><div style="position:absolute;left:25px;top:352px;width:1px;height:17px;background:#a8a8a8"></div><div style="position:absolute;left:62px;top:352px;width:1px;height:17px;background:#a8a8a8"></div><div style="position:absolute;left:172px;top:352px;width:1px;height:17px;background:#a8a8a8"></div><div style="position:absolute;left:229px;top:352px;width:1px;height:17px;background:#a8a8a8"></div><div style="position:absolute;left:307px;top:352px;width:1px;height:17px;background:#a8a8a8"></div><div style="position:absolute;left:384px;top:352px;width:1px;height:17px;background:#a8a8a8"></div><div style="position:absolute;left:461px;top:352px;width:1px;height:17px;background:#a8a8a8"></div><div style="position:absolute;left:538px;top:352px;width:1px;height:17px;background:#a8a8a8"></div><div style="position:absolute;left:616px;top:352px;width:1px;height:17px;background:#a8a8a8"></div><div style="position:absolute;left:693px;top:352px;width:1px;height:17px;background:#a8a8a8"></div><div style="position:absolute;left:775px;top:352px;width:1px;height:17px;background:#a8a8a8"></div><div style="position:absolute;left:28px;top:361px;width:3px;height:1px;background:rgba(0,0,0,0.75)"></div><div style="position:absolute;left:28px;top:360px;width:3px;height:1px;background:rgba(0,0,0,0.22)"></div><div style="position:absolute;left:32px;top:361px;width:3px;height:1px;background:rgba(0,0,0,0.75)"></div><div style="position:absolute;left:32px;top:360px;width:3px;height:1px;background:rgba(0,0,0,0.22)"></div><div style="position:absolute;left:36px;top:361px;width:3px;height:1px;background:rgba(0,0,0,0.75)"></div><div style="position:absolute;left:36px;top:360px;width:3px;height:1px;background:rgba(0,0,0,0.22)"></div><div style="position:absolute;left:40px;top:361px;width:3px;height:1px;background:rgba(0,0,0,0.75)"></div><div style="position:absolute;left:40px;top:360px;width:3px;height:1px;background:rgba(0,0,0,0.22)"></div><div class="t " style="left:65px;top:356.49px;font-size:11px;color:#000;">8752/060/0782</div><div class="t" style="right:110px;top:356.49px;font-size:11px;color:#000;">1.00000</div><div class="t" style="right:28px;top:356.49px;font-size:11px;color:#000;">1.00000</div><div style="position:absolute;left:14px;top:370px;width:11px;height:17px;background:#f0f0f0;box-shadow:inset 1px 1px 0 #fff"></div><div style="position:absolute;left:26px;top:370px;width:749px;height:17px;background:#eefcee"></div><div style="position:absolute;left:14px;top:387px;width:762px;height:1px;background:#b2b6b2"></div><div style="position:absolute;left:25px;top:370px;width:1px;height:17px;background:#a8a8a8"></div><div style="position:absolute;left:62px;top:370px;width:1px;height:17px;background:#a8a8a8"></div><div style="position:absolute;left:172px;top:370px;width:1px;height:17px;background:#a8a8a8"></div><div style="position:absolute;left:229px;top:370px;width:1px;height:17px;background:#a8a8a8"></div><div style="position:absolute;left:307px;top:370px;width:1px;height:17px;background:#a8a8a8"></div><div style="position:absolute;left:384px;top:370px;width:1px;height:17px;background:#a8a8a8"></div><div style="position:absolute;left:461px;top:370px;width:1px;height:17px;background:#a8a8a8"></div><div style="position:absolute;left:538px;top:370px;width:1px;height:17px;background:#a8a8a8"></div><div style="position:absolute;left:616px;top:370px;width:1px;height:17px;background:#a8a8a8"></div><div style="position:absolute;left:693px;top:370px;width:1px;height:17px;background:#a8a8a8"></div><div style="position:absolute;left:775px;top:370px;width:1px;height:17px;background:#a8a8a8"></div><div style="position:absolute;left:28px;top:379px;width:3px;height:1px;background:rgba(0,0,0,0.75)"></div><div style="position:absolute;left:28px;top:378px;width:3px;height:1px;background:rgba(0,0,0,0.22)"></div><div style="position:absolute;left:32px;top:379px;width:3px;height:1px;background:rgba(0,0,0,0.75)"></div><div style="position:absolute;left:32px;top:378px;width:3px;height:1px;background:rgba(0,0,0,0.22)"></div><div style="position:absolute;left:36px;top:379px;width:3px;height:1px;background:rgba(0,0,0,0.75)"></div><div style="position:absolute;left:36px;top:378px;width:3px;height:1px;background:rgba(0,0,0,0.22)"></div><div style="position:absolute;left:40px;top:379px;width:3px;height:1px;background:rgba(0,0,0,0.75)"></div><div style="position:absolute;left:40px;top:378px;width:3px;height:1px;background:rgba(0,0,0,0.22)"></div><div class="t " style="left:64px;top:374.49px;font-size:11px;color:#000;letter-spacing:-1px">ANT</div><div class="t" style="right:496px;top:374.49px;font-size:11px;color:#000;">10.00000</div><div class="t" style="right:110px;top:374.49px;font-size:11px;color:#000;">27.00000</div><div class="t" style="right:28px;top:374.49px;font-size:11px;color:#000;">37.00000</div><div style="position:absolute;left:14px;top:388px;width:11px;height:17px;background:#f0f0f0;box-shadow:inset 1px 1px 0 #fff"></div><div style="position:absolute;left:26px;top:388px;width:749px;height:17px;background:#ffffff"></div><div style="position:absolute;left:14px;top:405px;width:762px;height:1px;background:#b2b6b2"></div><div style="position:absolute;left:25px;top:388px;width:1px;height:17px;background:#a8a8a8"></div><div style="position:absolute;left:62px;top:388px;width:1px;height:17px;background:#a8a8a8"></div><div style="position:absolute;left:172px;top:388px;width:1px;height:17px;background:#a8a8a8"></div><div style="position:absolute;left:229px;top:388px;width:1px;height:17px;background:#a8a8a8"></div><div style="position:absolute;left:307px;top:388px;width:1px;height:17px;background:#a8a8a8"></div><div style="position:absolute;left:384px;top:388px;width:1px;height:17px;background:#a8a8a8"></div><div style="position:absolute;left:461px;top:388px;width:1px;height:17px;background:#a8a8a8"></div><div style="position:absolute;left:538px;top:388px;width:1px;height:17px;background:#a8a8a8"></div><div style="position:absolute;left:616px;top:388px;width:1px;height:17px;background:#a8a8a8"></div><div style="position:absolute;left:693px;top:388px;width:1px;height:17px;background:#a8a8a8"></div><div style="position:absolute;left:775px;top:388px;width:1px;height:17px;background:#a8a8a8"></div><div style="position:absolute;left:28px;top:397px;width:3px;height:1px;background:rgba(0,0,0,0.75)"></div><div style="position:absolute;left:28px;top:396px;width:3px;height:1px;background:rgba(0,0,0,0.22)"></div><div style="position:absolute;left:32px;top:397px;width:3px;height:1px;background:rgba(0,0,0,0.75)"></div><div style="position:absolute;left:32px;top:396px;width:3px;height:1px;background:rgba(0,0,0,0.22)"></div><div style="position:absolute;left:36px;top:397px;width:3px;height:1px;background:rgba(0,0,0,0.75)"></div><div style="position:absolute;left:36px;top:396px;width:3px;height:1px;background:rgba(0,0,0,0.22)"></div><div style="position:absolute;left:40px;top:397px;width:3px;height:1px;background:rgba(0,0,0,0.75)"></div><div style="position:absolute;left:40px;top:396px;width:3px;height:1px;background:rgba(0,0,0,0.22)"></div><div class="t " style="left:64px;top:392.49px;font-size:11px;color:#000;letter-spacing:-0.4px">BOM</div><div class="t" style="right:110px;top:392.49px;font-size:11px;color:#000;">3.00000</div><div class="t" style="right:28px;top:392.49px;font-size:11px;color:#000;">3.00000</div><div style="position:absolute;left:14px;top:406px;width:11px;height:17px;background:#f0f0f0;box-shadow:inset 1px 1px 0 #fff"></div><div style="position:absolute;left:26px;top:406px;width:749px;height:17px;background:#eefcee"></div><div style="position:absolute;left:14px;top:423px;width:762px;height:1px;background:#b2b6b2"></div><div style="position:absolute;left:25px;top:406px;width:1px;height:17px;background:#a8a8a8"></div><div style="position:absolute;left:62px;top:406px;width:1px;height:17px;background:#a8a8a8"></div><div style="position:absolute;left:172px;top:406px;width:1px;height:17px;background:#a8a8a8"></div><div style="position:absolute;left:229px;top:406px;width:1px;height:17px;background:#a8a8a8"></div><div style="position:absolute;left:307px;top:406px;width:1px;height:17px;background:#a8a8a8"></div><div style="position:absolute;left:384px;top:406px;width:1px;height:17px;background:#a8a8a8"></div><div style="position:absolute;left:461px;top:406px;width:1px;height:17px;background:#a8a8a8"></div><div style="position:absolute;left:538px;top:406px;width:1px;height:17px;background:#a8a8a8"></div><div style="position:absolute;left:616px;top:406px;width:1px;height:17px;background:#a8a8a8"></div><div style="position:absolute;left:693px;top:406px;width:1px;height:17px;background:#a8a8a8"></div><div style="position:absolute;left:775px;top:406px;width:1px;height:17px;background:#a8a8a8"></div><div style="position:absolute;left:28px;top:415px;width:3px;height:1px;background:rgba(0,0,0,0.75)"></div><div style="position:absolute;left:28px;top:414px;width:3px;height:1px;background:rgba(0,0,0,0.22)"></div><div style="position:absolute;left:32px;top:415px;width:3px;height:1px;background:rgba(0,0,0,0.75)"></div><div style="position:absolute;left:32px;top:414px;width:3px;height:1px;background:rgba(0,0,0,0.22)"></div><div style="position:absolute;left:36px;top:415px;width:3px;height:1px;background:rgba(0,0,0,0.75)"></div><div style="position:absolute;left:36px;top:414px;width:3px;height:1px;background:rgba(0,0,0,0.22)"></div><div style="position:absolute;left:40px;top:415px;width:3px;height:1px;background:rgba(0,0,0,0.75)"></div><div style="position:absolute;left:40px;top:414px;width:3px;height:1px;background:rgba(0,0,0,0.22)"></div><div class="t " style="left:64px;top:410.49px;font-size:11px;color:#000;letter-spacing:-0.7px">BOMBOM</div><div class="t" style="right:110px;top:410.49px;font-size:11px;color:#000;">31.00000</div><div class="t" style="right:28px;top:410.49px;font-size:11px;color:#000;">31.00000</div><div style="position:absolute;left:14px;top:424px;width:11px;height:17px;background:#f0f0f0;box-shadow:inset 1px 1px 0 #fff"></div><div style="position:absolute;left:26px;top:424px;width:749px;height:17px;background:#ffffff"></div><div style="position:absolute;left:14px;top:441px;width:762px;height:1px;background:#b2b6b2"></div><div style="position:absolute;left:25px;top:424px;width:1px;height:17px;background:#a8a8a8"></div><div style="position:absolute;left:62px;top:424px;width:1px;height:17px;background:#a8a8a8"></div><div style="position:absolute;left:172px;top:424px;width:1px;height:17px;background:#a8a8a8"></div><div style="position:absolute;left:229px;top:424px;width:1px;height:17px;background:#a8a8a8"></div><div style="position:absolute;left:307px;top:424px;width:1px;height:17px;background:#a8a8a8"></div><div style="position:absolute;left:384px;top:424px;width:1px;height:17px;background:#a8a8a8"></div><div style="position:absolute;left:461px;top:424px;width:1px;height:17px;background:#a8a8a8"></div><div style="position:absolute;left:538px;top:424px;width:1px;height:17px;background:#a8a8a8"></div><div style="position:absolute;left:616px;top:424px;width:1px;height:17px;background:#a8a8a8"></div><div style="position:absolute;left:693px;top:424px;width:1px;height:17px;background:#a8a8a8"></div><div style="position:absolute;left:775px;top:424px;width:1px;height:17px;background:#a8a8a8"></div><div style="position:absolute;left:28px;top:433px;width:3px;height:1px;background:rgba(0,0,0,0.75)"></div><div style="position:absolute;left:28px;top:432px;width:3px;height:1px;background:rgba(0,0,0,0.22)"></div><div style="position:absolute;left:32px;top:433px;width:3px;height:1px;background:rgba(0,0,0,0.75)"></div><div style="position:absolute;left:32px;top:432px;width:3px;height:1px;background:rgba(0,0,0,0.22)"></div><div style="position:absolute;left:36px;top:433px;width:3px;height:1px;background:rgba(0,0,0,0.75)"></div><div style="position:absolute;left:36px;top:432px;width:3px;height:1px;background:rgba(0,0,0,0.22)"></div><div style="position:absolute;left:40px;top:433px;width:3px;height:1px;background:rgba(0,0,0,0.75)"></div><div style="position:absolute;left:40px;top:432px;width:3px;height:1px;background:rgba(0,0,0,0.22)"></div><div class="t " style="left:64px;top:428.49px;font-size:11px;color:#000;letter-spacing:-0.42px">C-PRE-100</div><div class="t" style="right:110px;top:428.49px;font-size:11px;color:#000;">92.00000</div><div class="t" style="right:28px;top:428.49px;font-size:11px;color:#000;">92.00000</div><div style="position:absolute;left:14px;top:442px;width:11px;height:17px;background:#f0f0f0;box-shadow:inset 1px 1px 0 #fff"></div><div style="position:absolute;left:26px;top:442px;width:749px;height:17px;background:#eefcee"></div><div style="position:absolute;left:14px;top:459px;width:762px;height:1px;background:#b2b6b2"></div><div style="position:absolute;left:25px;top:442px;width:1px;height:17px;background:#a8a8a8"></div><div style="position:absolute;left:62px;top:442px;width:1px;height:17px;background:#a8a8a8"></div><div style="position:absolute;left:172px;top:442px;width:1px;height:17px;background:#a8a8a8"></div><div style="position:absolute;left:229px;top:442px;width:1px;height:17px;background:#a8a8a8"></div><div style="position:absolute;left:307px;top:442px;width:1px;height:17px;background:#a8a8a8"></div><div style="position:absolute;left:384px;top:442px;width:1px;height:17px;background:#a8a8a8"></div><div style="position:absolute;left:461px;top:442px;width:1px;height:17px;background:#a8a8a8"></div><div style="position:absolute;left:538px;top:442px;width:1px;height:17px;background:#a8a8a8"></div><div style="position:absolute;left:616px;top:442px;width:1px;height:17px;background:#a8a8a8"></div><div style="position:absolute;left:693px;top:442px;width:1px;height:17px;background:#a8a8a8"></div><div style="position:absolute;left:775px;top:442px;width:1px;height:17px;background:#a8a8a8"></div><div style="position:absolute;left:28px;top:451px;width:3px;height:1px;background:rgba(0,0,0,0.75)"></div><div style="position:absolute;left:28px;top:450px;width:3px;height:1px;background:rgba(0,0,0,0.22)"></div><div style="position:absolute;left:32px;top:451px;width:3px;height:1px;background:rgba(0,0,0,0.75)"></div><div style="position:absolute;left:32px;top:450px;width:3px;height:1px;background:rgba(0,0,0,0.22)"></div><div style="position:absolute;left:36px;top:451px;width:3px;height:1px;background:rgba(0,0,0,0.75)"></div><div style="position:absolute;left:36px;top:450px;width:3px;height:1px;background:rgba(0,0,0,0.22)"></div><div style="position:absolute;left:40px;top:451px;width:3px;height:1px;background:rgba(0,0,0,0.75)"></div><div style="position:absolute;left:40px;top:450px;width:3px;height:1px;background:rgba(0,0,0,0.22)"></div><div class="t " style="left:64px;top:446.49px;font-size:11px;color:#000;letter-spacing:-0.4px">C-PRE-50</div><div class="t" style="right:110px;top:446.49px;font-size:11px;color:#000;">20.00000</div><div class="t" style="right:28px;top:446.49px;font-size:11px;color:#000;">20.00000</div><div style="position:absolute;left:14px;top:460px;width:11px;height:17px;background:#f0f0f0;box-shadow:inset 1px 1px 0 #fff"></div><div style="position:absolute;left:26px;top:460px;width:749px;height:17px;background:#ffffff"></div><div style="position:absolute;left:14px;top:477px;width:762px;height:1px;background:#b2b6b2"></div><div style="position:absolute;left:25px;top:460px;width:1px;height:17px;background:#a8a8a8"></div><div style="position:absolute;left:62px;top:460px;width:1px;height:17px;background:#a8a8a8"></div><div style="position:absolute;left:172px;top:460px;width:1px;height:17px;background:#a8a8a8"></div><div style="position:absolute;left:229px;top:460px;width:1px;height:17px;background:#a8a8a8"></div><div style="position:absolute;left:307px;top:460px;width:1px;height:17px;background:#a8a8a8"></div><div style="position:absolute;left:384px;top:460px;width:1px;height:17px;background:#a8a8a8"></div><div style="position:absolute;left:461px;top:460px;width:1px;height:17px;background:#a8a8a8"></div><div style="position:absolute;left:538px;top:460px;width:1px;height:17px;background:#a8a8a8"></div><div style="position:absolute;left:616px;top:460px;width:1px;height:17px;background:#a8a8a8"></div><div style="position:absolute;left:693px;top:460px;width:1px;height:17px;background:#a8a8a8"></div><div style="position:absolute;left:775px;top:460px;width:1px;height:17px;background:#a8a8a8"></div><div style="position:absolute;left:28px;top:469px;width:3px;height:1px;background:rgba(0,0,0,0.75)"></div><div style="position:absolute;left:28px;top:468px;width:3px;height:1px;background:rgba(0,0,0,0.22)"></div><div style="position:absolute;left:32px;top:469px;width:3px;height:1px;background:rgba(0,0,0,0.75)"></div><div style="position:absolute;left:32px;top:468px;width:3px;height:1px;background:rgba(0,0,0,0.22)"></div><div style="position:absolute;left:36px;top:469px;width:3px;height:1px;background:rgba(0,0,0,0.75)"></div><div style="position:absolute;left:36px;top:468px;width:3px;height:1px;background:rgba(0,0,0,0.22)"></div><div style="position:absolute;left:40px;top:469px;width:3px;height:1px;background:rgba(0,0,0,0.75)"></div><div style="position:absolute;left:40px;top:468px;width:3px;height:1px;background:rgba(0,0,0,0.22)"></div><div class="t " style="left:64px;top:464.49px;font-size:11px;color:#000;letter-spacing:-0.9px">COVER</div><div class="t" style="right:110px;top:464.49px;font-size:11px;color:#000;">72.00000</div><div class="t" style="right:28px;top:464.49px;font-size:11px;color:#000;">72.00000</div><div style="position:absolute;left:14px;top:478px;width:11px;height:17px;background:#f0f0f0;box-shadow:inset 1px 1px 0 #fff"></div><div style="position:absolute;left:26px;top:478px;width:749px;height:17px;background:#eefcee"></div><div style="position:absolute;left:14px;top:495px;width:762px;height:1px;background:#b2b6b2"></div><div style="position:absolute;left:25px;top:478px;width:1px;height:17px;background:#a8a8a8"></div><div style="position:absolute;left:62px;top:478px;width:1px;height:17px;background:#a8a8a8"></div><div style="position:absolute;left:172px;top:478px;width:1px;height:17px;background:#a8a8a8"></div><div style="position:absolute;left:229px;top:478px;width:1px;height:17px;background:#a8a8a8"></div><div style="position:absolute;left:307px;top:478px;width:1px;height:17px;background:#a8a8a8"></div><div style="position:absolute;left:384px;top:478px;width:1px;height:17px;background:#a8a8a8"></div><div style="position:absolute;left:461px;top:478px;width:1px;height:17px;background:#a8a8a8"></div><div style="position:absolute;left:538px;top:478px;width:1px;height:17px;background:#a8a8a8"></div><div style="position:absolute;left:616px;top:478px;width:1px;height:17px;background:#a8a8a8"></div><div style="position:absolute;left:693px;top:478px;width:1px;height:17px;background:#a8a8a8"></div><div style="position:absolute;left:775px;top:478px;width:1px;height:17px;background:#a8a8a8"></div><div style="position:absolute;left:28px;top:487px;width:3px;height:1px;background:rgba(0,0,0,0.75)"></div><div style="position:absolute;left:28px;top:486px;width:3px;height:1px;background:rgba(0,0,0,0.22)"></div><div style="position:absolute;left:32px;top:487px;width:3px;height:1px;background:rgba(0,0,0,0.75)"></div><div style="position:absolute;left:32px;top:486px;width:3px;height:1px;background:rgba(0,0,0,0.22)"></div><div style="position:absolute;left:36px;top:487px;width:3px;height:1px;background:rgba(0,0,0,0.75)"></div><div style="position:absolute;left:36px;top:486px;width:3px;height:1px;background:rgba(0,0,0,0.22)"></div><div style="position:absolute;left:40px;top:487px;width:3px;height:1px;background:rgba(0,0,0,0.75)"></div><div style="position:absolute;left:40px;top:486px;width:3px;height:1px;background:rgba(0,0,0,0.22)"></div><div class="t " style="left:64px;top:482.49px;font-size:11px;color:#000;letter-spacing:-0.42px">D-PRE-100</div><div class="t" style="right:110px;top:482.49px;font-size:11px;color:#000;">30.00000</div><div class="t" style="right:28px;top:482.49px;font-size:11px;color:#000;">30.00000</div><div style="position:absolute;left:14px;top:496px;width:11px;height:17px;background:#f0f0f0;box-shadow:inset 1px 1px 0 #fff"></div><div style="position:absolute;left:26px;top:496px;width:749px;height:17px;background:#ffffff"></div><div style="position:absolute;left:14px;top:513px;width:762px;height:1px;background:#b2b6b2"></div><div style="position:absolute;left:25px;top:496px;width:1px;height:17px;background:#a8a8a8"></div><div style="position:absolute;left:62px;top:496px;width:1px;height:17px;background:#a8a8a8"></div><div style="position:absolute;left:172px;top:496px;width:1px;height:17px;background:#a8a8a8"></div><div style="position:absolute;left:229px;top:496px;width:1px;height:17px;background:#a8a8a8"></div><div style="position:absolute;left:307px;top:496px;width:1px;height:17px;background:#a8a8a8"></div><div style="position:absolute;left:384px;top:496px;width:1px;height:17px;background:#a8a8a8"></div><div style="position:absolute;left:461px;top:496px;width:1px;height:17px;background:#a8a8a8"></div><div style="position:absolute;left:538px;top:496px;width:1px;height:17px;background:#a8a8a8"></div><div style="position:absolute;left:616px;top:496px;width:1px;height:17px;background:#a8a8a8"></div><div style="position:absolute;left:693px;top:496px;width:1px;height:17px;background:#a8a8a8"></div><div style="position:absolute;left:775px;top:496px;width:1px;height:17px;background:#a8a8a8"></div><div style="position:absolute;left:28px;top:505px;width:3px;height:1px;background:rgba(0,0,0,0.75)"></div><div style="position:absolute;left:28px;top:504px;width:3px;height:1px;background:rgba(0,0,0,0.22)"></div><div style="position:absolute;left:32px;top:505px;width:3px;height:1px;background:rgba(0,0,0,0.75)"></div><div style="position:absolute;left:32px;top:504px;width:3px;height:1px;background:rgba(0,0,0,0.22)"></div><div style="position:absolute;left:36px;top:505px;width:3px;height:1px;background:rgba(0,0,0,0.75)"></div><div style="position:absolute;left:36px;top:504px;width:3px;height:1px;background:rgba(0,0,0,0.22)"></div><div style="position:absolute;left:40px;top:505px;width:3px;height:1px;background:rgba(0,0,0,0.75)"></div><div style="position:absolute;left:40px;top:504px;width:3px;height:1px;background:rgba(0,0,0,0.22)"></div><div class="t " style="left:64px;top:500.49px;font-size:11px;color:#000;letter-spacing:-0.4px">D-PRE-50</div><div class="t" style="right:110px;top:500.49px;font-size:11px;color:#000;">15.00000</div><div class="t" style="right:28px;top:500.49px;font-size:11px;color:#000;">15.00000</div><div style="position:absolute;left:14px;top:514px;width:11px;height:16px;background:#f0f0f0;box-shadow:inset 1px 1px 0 #fff"></div><div style="position:absolute;left:26px;top:514px;width:749px;height:16px;background:#eefcee"></div><div style="position:absolute;left:14px;top:530px;width:762px;height:1px;background:#b2b6b2"></div><div style="position:absolute;left:25px;top:514px;width:1px;height:16px;background:#a8a8a8"></div><div style="position:absolute;left:62px;top:514px;width:1px;height:16px;background:#a8a8a8"></div><div style="position:absolute;left:172px;top:514px;width:1px;height:16px;background:#a8a8a8"></div><div style="position:absolute;left:229px;top:514px;width:1px;height:16px;background:#a8a8a8"></div><div style="position:absolute;left:307px;top:514px;width:1px;height:16px;background:#a8a8a8"></div><div style="position:absolute;left:384px;top:514px;width:1px;height:16px;background:#a8a8a8"></div><div style="position:absolute;left:461px;top:514px;width:1px;height:16px;background:#a8a8a8"></div><div style="position:absolute;left:538px;top:514px;width:1px;height:16px;background:#a8a8a8"></div><div style="position:absolute;left:616px;top:514px;width:1px;height:16px;background:#a8a8a8"></div><div style="position:absolute;left:693px;top:514px;width:1px;height:16px;background:#a8a8a8"></div><div style="position:absolute;left:775px;top:514px;width:1px;height:16px;background:#a8a8a8"></div><div style="position:absolute;left:28px;top:523px;width:3px;height:1px;background:rgba(0,0,0,0.75)"></div><div style="position:absolute;left:28px;top:522px;width:3px;height:1px;background:rgba(0,0,0,0.22)"></div><div style="position:absolute;left:32px;top:523px;width:3px;height:1px;background:rgba(0,0,0,0.75)"></div><div style="position:absolute;left:32px;top:522px;width:3px;height:1px;background:rgba(0,0,0,0.22)"></div><div style="position:absolute;left:36px;top:523px;width:3px;height:1px;background:rgba(0,0,0,0.75)"></div><div style="position:absolute;left:36px;top:522px;width:3px;height:1px;background:rgba(0,0,0,0.22)"></div><div style="position:absolute;left:40px;top:523px;width:3px;height:1px;background:rgba(0,0,0,0.75)"></div><div style="position:absolute;left:40px;top:522px;width:3px;height:1px;background:rgba(0,0,0,0.22)"></div><div class="t " style="left:64px;top:518.49px;font-size:11px;color:#000;letter-spacing:-0.1px">E-A1018s</div><div class="t" style="right:110px;top:518.49px;font-size:11px;color:#000;">15.00000</div><div class="t" style="right:28px;top:518.49px;font-size:11px;color:#000;">15.00000</div><div style="position:absolute;left:14px;top:531px;width:11px;height:17px;background:#f0f0f0;box-shadow:inset 1px 1px 0 #fff"></div><div style="position:absolute;left:26px;top:531px;width:749px;height:17px;background:#ffffff"></div><div style="position:absolute;left:14px;top:548px;width:762px;height:1px;background:#b2b6b2"></div><div style="position:absolute;left:25px;top:531px;width:1px;height:17px;background:#a8a8a8"></div><div style="position:absolute;left:62px;top:531px;width:1px;height:17px;background:#a8a8a8"></div><div style="position:absolute;left:172px;top:531px;width:1px;height:17px;background:#a8a8a8"></div><div style="position:absolute;left:229px;top:531px;width:1px;height:17px;background:#a8a8a8"></div><div style="position:absolute;left:307px;top:531px;width:1px;height:17px;background:#a8a8a8"></div><div style="position:absolute;left:384px;top:531px;width:1px;height:17px;background:#a8a8a8"></div><div style="position:absolute;left:461px;top:531px;width:1px;height:17px;background:#a8a8a8"></div><div style="position:absolute;left:538px;top:531px;width:1px;height:17px;background:#a8a8a8"></div><div style="position:absolute;left:616px;top:531px;width:1px;height:17px;background:#a8a8a8"></div><div style="position:absolute;left:693px;top:531px;width:1px;height:17px;background:#a8a8a8"></div><div style="position:absolute;left:775px;top:531px;width:1px;height:17px;background:#a8a8a8"></div><div style="position:absolute;left:28px;top:540px;width:3px;height:1px;background:rgba(0,0,0,0.75)"></div><div style="position:absolute;left:28px;top:539px;width:3px;height:1px;background:rgba(0,0,0,0.22)"></div><div style="position:absolute;left:32px;top:540px;width:3px;height:1px;background:rgba(0,0,0,0.75)"></div><div style="position:absolute;left:32px;top:539px;width:3px;height:1px;background:rgba(0,0,0,0.22)"></div><div style="position:absolute;left:36px;top:540px;width:3px;height:1px;background:rgba(0,0,0,0.75)"></div><div style="position:absolute;left:36px;top:539px;width:3px;height:1px;background:rgba(0,0,0,0.22)"></div><div style="position:absolute;left:40px;top:540px;width:3px;height:1px;background:rgba(0,0,0,0.75)"></div><div style="position:absolute;left:40px;top:539px;width:3px;height:1px;background:rgba(0,0,0,0.22)"></div><div class="t " style="left:64px;top:535.49px;font-size:11px;color:#000;letter-spacing:-0.2px">E-BAT</div><div class="t" style="right:110px;top:535.49px;font-size:11px;color:#000;">6.00000</div><div class="t" style="right:28px;top:535.49px;font-size:11px;color:#000;">6.00000</div><div style="position:absolute;left:14px;top:549px;width:11px;height:17px;background:#f0f0f0;box-shadow:inset 1px 1px 0 #fff"></div><div style="position:absolute;left:26px;top:549px;width:749px;height:17px;background:#eefcee"></div><div style="position:absolute;left:14px;top:566px;width:762px;height:1px;background:#b2b6b2"></div><div style="position:absolute;left:25px;top:549px;width:1px;height:17px;background:#a8a8a8"></div><div style="position:absolute;left:62px;top:549px;width:1px;height:17px;background:#a8a8a8"></div><div style="position:absolute;left:172px;top:549px;width:1px;height:17px;background:#a8a8a8"></div><div style="position:absolute;left:229px;top:549px;width:1px;height:17px;background:#a8a8a8"></div><div style="position:absolute;left:307px;top:549px;width:1px;height:17px;background:#a8a8a8"></div><div style="position:absolute;left:384px;top:549px;width:1px;height:17px;background:#a8a8a8"></div><div style="position:absolute;left:461px;top:549px;width:1px;height:17px;background:#a8a8a8"></div><div style="position:absolute;left:538px;top:549px;width:1px;height:17px;background:#a8a8a8"></div><div style="position:absolute;left:616px;top:549px;width:1px;height:17px;background:#a8a8a8"></div><div style="position:absolute;left:693px;top:549px;width:1px;height:17px;background:#a8a8a8"></div><div style="position:absolute;left:775px;top:549px;width:1px;height:17px;background:#a8a8a8"></div><div style="position:absolute;left:28px;top:558px;width:3px;height:1px;background:rgba(0,0,0,0.75)"></div><div style="position:absolute;left:28px;top:557px;width:3px;height:1px;background:rgba(0,0,0,0.22)"></div><div style="position:absolute;left:32px;top:558px;width:3px;height:1px;background:rgba(0,0,0,0.75)"></div><div style="position:absolute;left:32px;top:557px;width:3px;height:1px;background:rgba(0,0,0,0.22)"></div><div style="position:absolute;left:36px;top:558px;width:3px;height:1px;background:rgba(0,0,0,0.75)"></div><div style="position:absolute;left:36px;top:557px;width:3px;height:1px;background:rgba(0,0,0,0.22)"></div><div style="position:absolute;left:40px;top:558px;width:3px;height:1px;background:rgba(0,0,0,0.75)"></div><div style="position:absolute;left:40px;top:557px;width:3px;height:1px;background:rgba(0,0,0,0.22)"></div><div class="t " style="left:64px;top:553.49px;font-size:11px;color:#000;letter-spacing:-0.2px">E-T10s</div><div class="t" style="right:110px;top:553.49px;font-size:11px;color:#000;">27.00000</div><div class="t" style="right:28px;top:553.49px;font-size:11px;color:#000;">27.00000</div><svg style="position:absolute;left:18px;top:302px" width="6" height="10" viewBox="0 0 6 10"><path d="M0,0 L5,5 L0,10 Z" fill="#000"/></svg><div style="position:absolute;left:26px;top:298px;width:37px;height:2px;opacity:0.8;background:repeating-linear-gradient(90deg,#f0a060 0 1px,transparent 1px 2px)"></div><div style="position:absolute;left:26px;top:314px;width:37px;height:2px;opacity:0.8;background:repeating-linear-gradient(90deg,#f0a060 0 1px,transparent 1px 2px)"></div><div style="position:absolute;left:63px;top:298px;width:110px;height:2px;opacity:0.8;background:repeating-linear-gradient(90deg,#404040 0 1px,transparent 1px 2px)"></div><div style="position:absolute;left:63px;top:314px;width:110px;height:2px;opacity:0.8;background:repeating-linear-gradient(90deg,#404040 0 1px,transparent 1px 2px)"></div><div style="position:absolute;left:173px;top:298px;width:602px;height:2px;opacity:0.8;background:repeating-linear-gradient(90deg,#f0a060 0 1px,transparent 1px 2px)"></div><div style="position:absolute;left:173px;top:314px;width:602px;height:2px;opacity:0.8;background:repeating-linear-gradient(90deg,#f0a060 0 1px,transparent 1px 2px)"></div><div style="position:absolute;left:26px;top:298px;width:1px;height:18px;background:repeating-linear-gradient(180deg,#f0a060 0 1px,transparent 1px 2px)"></div><div style="position:absolute;left:774px;top:298px;width:1px;height:18px;background:repeating-linear-gradient(180deg,#f0a060 0 1px,transparent 1px 2px)"></div><div style="position:absolute;left:14px;top:567px;width:762px;height:2px;background:#fff"></div><div style="position:absolute;left:25px;top:567px;width:1px;height:2px;background:#a8a8a8"></div><div style="position:absolute;left:62px;top:567px;width:1px;height:2px;background:#a8a8a8"></div><div style="position:absolute;left:172px;top:567px;width:1px;height:2px;background:#a8a8a8"></div><div style="position:absolute;left:229px;top:567px;width:1px;height:2px;background:#a8a8a8"></div><div style="position:absolute;left:307px;top:567px;width:1px;height:2px;background:#a8a8a8"></div><div style="position:absolute;left:384px;top:567px;width:1px;height:2px;background:#a8a8a8"></div><div style="position:absolute;left:461px;top:567px;width:1px;height:2px;background:#a8a8a8"></div><div style="position:absolute;left:538px;top:567px;width:1px;height:2px;background:#a8a8a8"></div><div style="position:absolute;left:616px;top:567px;width:1px;height:2px;background:#a8a8a8"></div><div style="position:absolute;left:693px;top:567px;width:1px;height:2px;background:#a8a8a8"></div><div style="position:absolute;left:775px;top:567px;width:1px;height:2px;background:#a8a8a8"></div><div style="position:absolute;left:13px;top:592px;width:781px;height:1px;background:#8a929c"></div><div style="position:absolute;left:14px;top:569px;width:762px;height:1px;background:#8c8c8c"></div><div style="position:absolute;left:14px;top:570px;width:762px;height:1px;background:#a4a4a4"></div><div style="position:absolute;left:14px;top:571px;width:762px;height:22px;background:#f0f0f0"></div><div style="position:absolute;left:25px;top:571px;width:1px;height:22px;background:#c8c8c8"></div><div style="position:absolute;left:64px;top:572px;width:106px;height:17px;border:1px solid #dcdcdc;background:#e6e8ea"></div><div class="t " style="left:67px;top:577.49px;font-size:11px;color:#000;">Count = 42</div><div style="position:absolute;left:231px;top:572px;width:73px;height:17px;border:1px solid #dcdcdc;background:#e6e8ea"></div><div class="t" style="right:497px;top:577.49px;font-size:11px;color:#000;">26.00000</div><div style="position:absolute;left:309px;top:572px;width:72px;height:17px;border:1px solid #dcdcdc;background:#e6e8ea"></div><div class="t" style="right:420px;top:577.49px;font-size:11px;color:#000;">5,002.00000</div><div style="position:absolute;left:386px;top:572px;width:72px;height:17px;border:1px solid #dcdcdc;background:#e6e8ea"></div><div class="t" style="right:343px;top:577.49px;font-size:11px;color:#000;">0.00000</div><div style="position:absolute;left:463px;top:572px;width:72px;height:17px;border:1px solid #dcdcdc;background:#e6e8ea"></div><div class="t" style="right:266px;top:577.49px;font-size:11px;color:#000;">0.00000</div><div style="position:absolute;left:540px;top:572px;width:73px;height:17px;border:1px solid #dcdcdc;background:#e6e8ea"></div><div class="t" style="right:188px;top:577.49px;font-size:11px;color:#000;">0.00000</div><div style="position:absolute;left:618px;top:572px;width:72px;height:17px;border:1px solid #dcdcdc;background:#e6e8ea"></div><div class="t" style="right:111px;top:577.49px;font-size:11px;color:#000;">-416.00000</div><div style="position:absolute;left:695px;top:572px;width:77px;height:17px;border:1px solid #dcdcdc;background:#e6e8ea"></div><div class="t" style="right:29px;top:577.49px;font-size:11px;color:#000;">4,612.00000</div><div style="position:absolute;left:775px;top:566px;width:1px;height:27px;background:#b0b0b0"></div><div style="position:absolute;left:660px;top:602px;width:11px;height:11px;border:1px solid #555;border-radius:1px;background:#fff;box-shadow:inset 0 0 0 0.5px #555"></div><svg style="position:absolute;left:660px;top:602px" width="13" height="13" viewBox="0 0 13 13"><path d="M2.2,6.8 L5,9.4 L10.8,3.4" stroke="#444" stroke-width="1.3" fill="none"/></svg><div class="t " style="left:675.5px;top:604.49px;font-size:11px;color:#000;">Qty</div><div style="position:absolute;left:723px;top:602px;width:11px;height:11px;border:1px solid #555;border-radius:1px;background:#fff;box-shadow:inset 0 0 0 0.5px #555"></div><div class="t " style="left:738.5px;top:604.49px;font-size:11px;color:#000;">Cost</div>
</body></html>
